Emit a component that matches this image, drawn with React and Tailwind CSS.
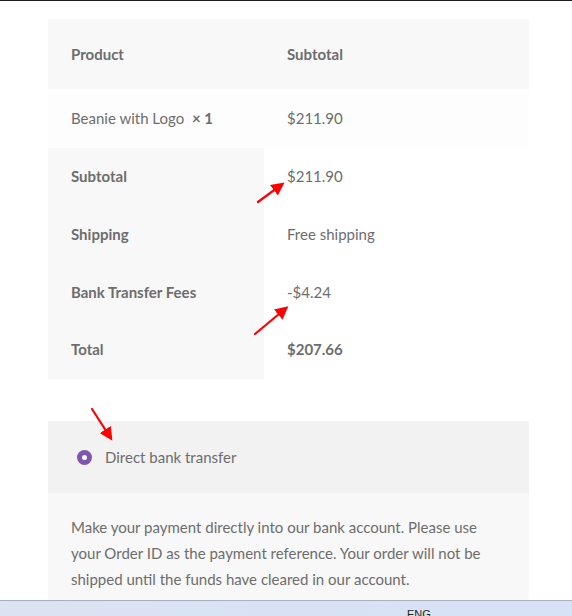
export default function App() {
  const font = { fontFamily: "Lato, 'Open Sans', sans-serif" };
  return (
    <div className="relative w-[572px] h-[616px] overflow-hidden bg-white text-[#6d6d6d]" style={font}>
      <div className="h-px bg-[#1e1f22]" />
      <div className="ml-[48px] w-[481px] mt-[18px] text-[15px]">
        <div className="flex h-[70px] items-center bg-[#f8f8f8] font-bold">
          <div className="w-[216px] pl-[23px]">Product</div>
          <div className="pl-[23px]">Subtotal</div>
        </div>
        <div className="flex h-[59px] items-center bg-[#fdfdfd] pb-[1px]">
          <div className="w-[216px] pl-[23px]">
            Beanie with Logo <span className="font-bold ml-1">× 1</span>
          </div>
          <div className="pl-[23px]">$211.90</div>
        </div>
        {[
          ["Subtotal", "$211.90", false, "h-[58px]"],
          ["Shipping", "Free shipping", false, "h-[58px]"],
          ["Bank Transfer Fees", "-$4.24", false, "h-[58px]"],
          ["Total", "$207.66", true, "h-[57px]"],
        ].map(([a, b, bold, h]) => (
          <div key={a} className={"flex " + h}>
            <div className="w-[216px] pl-[23px] pb-[2px] flex items-center bg-[#f8f8f8] font-bold">{a}</div>
            <div className={"pl-[23px] pb-[2px] flex items-center bg-white " + (bold ? "font-bold" : "")}>{b}</div>
          </div>
        ))}
        <div className="h-[42px]" />
        <div className="flex h-[72px] items-center bg-[#f2f2f2] pl-[29px]">
          <span className="w-[15px] h-[15px] rounded-full bg-[#7f54b3] flex items-center justify-center">
            <span className="w-[5px] h-[5px] rounded-full bg-white" />
          </span>
          <span className="ml-[13px]">Direct bank transfer</span>
        </div>
        <div className="bg-[#f8f8f8] px-[23px] pt-[21px] pb-[20px] leading-[26px]">
          Make your payment directly into our bank account. Please use your Order ID as the payment reference. Your order will not be shipped until the funds have cleared in our account.
        </div>
      </div>
      <div className="absolute left-0 right-0 top-[600px] h-[16px] border-t border-[#a9b0bd] bg-gradient-to-r from-[#dbe2f2] to-[#d7e2f7]">
        <span className="absolute left-[407px] top-[8px] text-[11px] text-[#222] leading-none" style={{ fontFamily: "'Liberation Sans', sans-serif" }}>ENG</span>
      </div>
      <svg className="absolute inset-0 pointer-events-none" width="572" height="616">
        <defs>
          <marker id="ah" markerWidth="6" markerHeight="6" refX="4" refY="3" orient="auto" markerUnits="strokeWidth">
            <path d="M0,0 L6,3 L0,6 Z" fill="#ff0000" />
          </marker>
        </defs>
        <line x1="258" y1="202" x2="281" y2="185" stroke="#ff0000" strokeWidth="2.2" strokeLinecap="round" markerEnd="url(#ah)" />
        <line x1="255" y1="334" x2="285" y2="309" stroke="#ff0000" strokeWidth="2.2" strokeLinecap="round" markerEnd="url(#ah)" />
        <line x1="92" y1="409" x2="110" y2="437" stroke="#ff0000" strokeWidth="2.2" strokeLinecap="round" markerEnd="url(#ah)" />
      </svg>
    </div>
  );
}
